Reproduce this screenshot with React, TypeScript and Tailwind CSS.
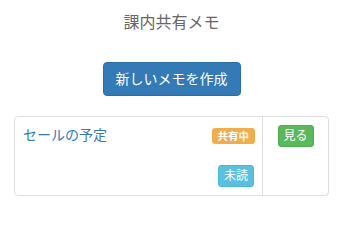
export default function App() {
  return (
    <div className="w-[343px] h-[216px] bg-white font-['Helvetica_Neue','Liberation_Sans','Noto_Sans_CJK_JP',sans-serif] text-[14px] leading-[20px] text-[#333]">
      <h4 className="pt-[12px] text-center text-[16px] leading-[22px] text-[#666]">課内共有メモ</h4>
      <div className="mt-[28px] flex justify-center">
        <button className="h-[34px] w-[138px] rounded-[4px] border border-[#2e6da4] bg-[#337ab7] text-[14px] text-white">
          新しいメモを作成
        </button>
      </div>
      <div className="mx-[14px] mt-[20px] flex rounded-[4px] border border-[#ddd]">
        <div className="flex w-[248px] flex-col border-r border-[#ddd] p-[8px]">
          <div className="flex items-start justify-between">
            <span className="text-[#337ab7]">セールの予定</span>
            <span className="mt-[3px] mr-[-1px] h-[16px] rounded-[3px] bg-[#f0ad4e] px-[6px] pt-[3px] text-[10.5px] leading-[10.5px] font-bold text-white">
              共有中
            </span>
          </div>
          <div className="mt-[20px] flex justify-end">
            <button className="h-[22px] w-[36px] rounded-[3px] border border-[#46b8da] bg-[#5bc0de] text-[12px] leading-[18px] text-white">
              未読
            </button>
          </div>
        </div>
        <div className="flex flex-1 justify-center p-[8px]">
          <div>
            <button className="h-[22px] w-[36px] rounded-[3px] border border-[#4cae4c] bg-[#5cb85c] text-[12px] leading-[18px] text-white">
              見る
            </button>
          </div>
        </div>
      </div>
    </div>
  );
}
